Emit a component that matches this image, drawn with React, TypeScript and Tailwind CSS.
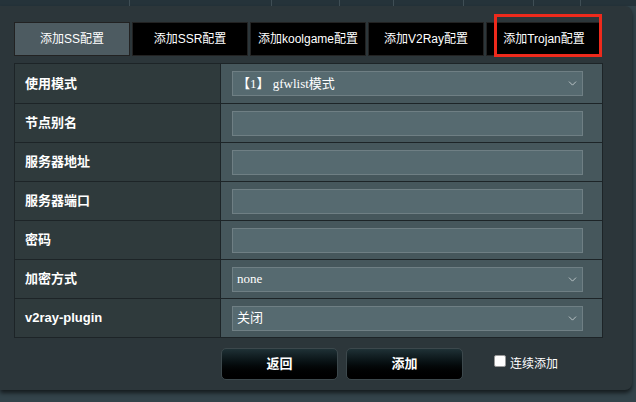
import { ChevronDown } from "lucide-react"

const tabs = ["添加SS配置", "添加SSR配置", "添加koolgame配置", "添加V2Ray配置", "添加Trojan配置"]

type Row = { label: string; kind: "input" | "select"; value?: string }

const rows: Row[] = [
  { label: "使用模式", kind: "select", value: "【1】 gfwlist模式" },
  { label: "节点别名", kind: "input" },
  { label: "服务器地址", kind: "input" },
  { label: "服务器端口", kind: "input" },
  { label: "密码", kind: "input" },
  { label: "加密方式", kind: "select", value: "none" },
  { label: "v2ray-plugin", kind: "select", value: "关闭" },
]

export default function App() {
  return (
    <div className="w-[636px] h-[402px] overflow-hidden bg-[#33434a] font-['Liberation_Sans','Noto_Sans_CJK_SC',sans-serif]">
      {/* page behind the dialog */}
      <div className="flex h-[6px] bg-[#25333a]">
        <div className="w-[130px] border-r border-[#3f4e55]" />
        <div className="w-[142px] border-r border-[#3f4e55]" />
        <div className="w-[68px] border-r border-[#3f4e55]" />
        <div className="w-[54px] border-r border-[#3f4e55]" />
        <div className="w-[70px] border-r border-[#3f4e55]" />
        <div className="w-[70px] border-r border-[#3f4e55]" />
        <div className="w-[47px] border-r border-[#3f4e55]" />
      </div>

      {/* dialog */}
      <div className="w-[632px] h-[384px] bg-[#2c363a] rounded-r-[7px] shadow-[0_3px_4px_rgba(0,0,0,0.6)] pt-4 px-[14px]">
        <div className="relative flex gap-[2px] w-[588px] h-[34px]">
          {tabs.map((t, i) => (
            <div
              key={t}
              className={`flex-1 flex items-center justify-center text-[12px] text-white border border-[#222] ${
                i === 0 ? "bg-[#4d5b61]" : "bg-black"
              }`}
            >
              {t}
            </div>
          ))}
          <div className="absolute left-[480px] top-[-8px] w-[108px] h-[43px] border-[3px] border-[#ee2a1c]" />
        </div>

        <div className="mt-[7px] w-[589px] border border-[#1d2427]">
          {rows.map((r, i) => (
            <div key={r.label} className={`flex h-[39px] ${i > 0 ? "border-t border-[#1d2427]" : ""}`}>
              <div className="w-[206px] bg-[#2f3a3c] border-r border-[#1d2427] flex items-center pl-[10px] text-[13px] font-bold text-white">
                {r.label}
              </div>
              <div className="flex-1 bg-[#46575c] flex items-center pl-[11px]">
                <div className="w-[351px] h-[25px] bg-[#566a70] border border-[#6f7f84] flex items-center justify-between pl-[4px] pr-[3px] text-[13px] text-white font-['Liberation_Serif','Noto_Sans_CJK_SC',serif]">
                  <span>{r.value}</span>
                  {r.kind === "select" && <ChevronDown size={13} strokeWidth={1.5} className="text-[#cfd6d8]" />}
                </div>
              </div>
            </div>
          ))}
        </div>

        <div className="flex items-center mt-[10px] pl-[207px]">
          <button className="w-[117px] h-[32px] rounded-[5px] border border-[#3c484c] bg-gradient-to-b from-[#1f3136] to-black text-white text-[13px] font-bold">
            返回
          </button>
          <button className="ml-[8px] w-[117px] h-[32px] rounded-[5px] border border-[#3c484c] bg-gradient-to-b from-[#1f3136] to-black text-white text-[13px] font-bold">
            添加
          </button>
          <label className="ml-[31px] flex items-center gap-[4px] text-[12px] text-white">
            <span className="w-[12px] h-[12px] bg-white rounded-[2px] border border-[#999] -mt-[6px]" />
            连续添加
          </label>
        </div>
      </div>
    </div>
  )
}
